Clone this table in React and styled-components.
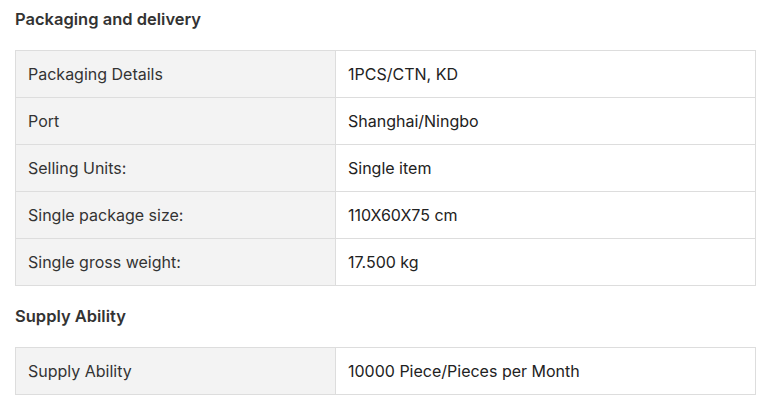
import React from "react";
import styled, { createGlobalStyle } from "styled-components";

const Global = createGlobalStyle`
  html, body { margin: 0; padding: 0; background: #fff; }
  body { font-family: Inter, "Noto Sans", Arial, sans-serif; color: #222; }
`;

const Page = styled.div`
  width: 741px;
  padding: 7px 0 0 15px;
  display: flex;
  flex-direction: column;
  gap: 18px;
`;

const Section = styled.section`
  display: flex;
  flex-direction: column;
  gap: 19px;
`;

const Heading = styled.h3`
  margin: 0;
  font-size: 16.5px;
  line-height: 24px;
  font-weight: 600;
  color: #333;
`;

const Table = styled.table`
  width: 741px;
  border-collapse: collapse;
  table-layout: fixed;
  font-size: 16px;
`;

const Row = styled.tr`
  height: 47px;
`;

const Cell = styled.td`
  border: 1px solid #ddd;
  padding: 0 12px;
  vertical-align: middle;
  line-height: 20px;
  width: ${(p) => (p.$label ? "295px" : "auto")};
  background: ${(p) => (p.$label ? "#f3f3f3" : "#fff")};
  color: ${(p) => (p.$label ? "#333" : "#222")};
`;

const sections = [
  {
    title: "Packaging and delivery",
    rows: [
      ["Packaging Details", "1PCS/CTN, KD"],
      ["Port", "Shanghai/Ningbo"],
      ["Selling Units:", "Single item"],
      ["Single package size:", "110X60X75 cm"],
      ["Single gross weight:", "17.500 kg"],
    ],
  },
  {
    title: "Supply Ability",
    rows: [["Supply Ability", "10000 Piece/Pieces per Month"]],
  },
];

export default function App() {
  return (
    <>
      <Global />
      <Page>
        {sections.map((s) => (
          <Section key={s.title}>
            <Heading>{s.title}</Heading>
            <Table>
              <tbody>
                {s.rows.map(([k, v]) => (
                  <Row key={k}>
                    <Cell $label>{k}</Cell>
                    <Cell>{v}</Cell>
                  </Row>
                ))}
              </tbody>
            </Table>
          </Section>
        ))}
      </Page>
    </>
  );
}
